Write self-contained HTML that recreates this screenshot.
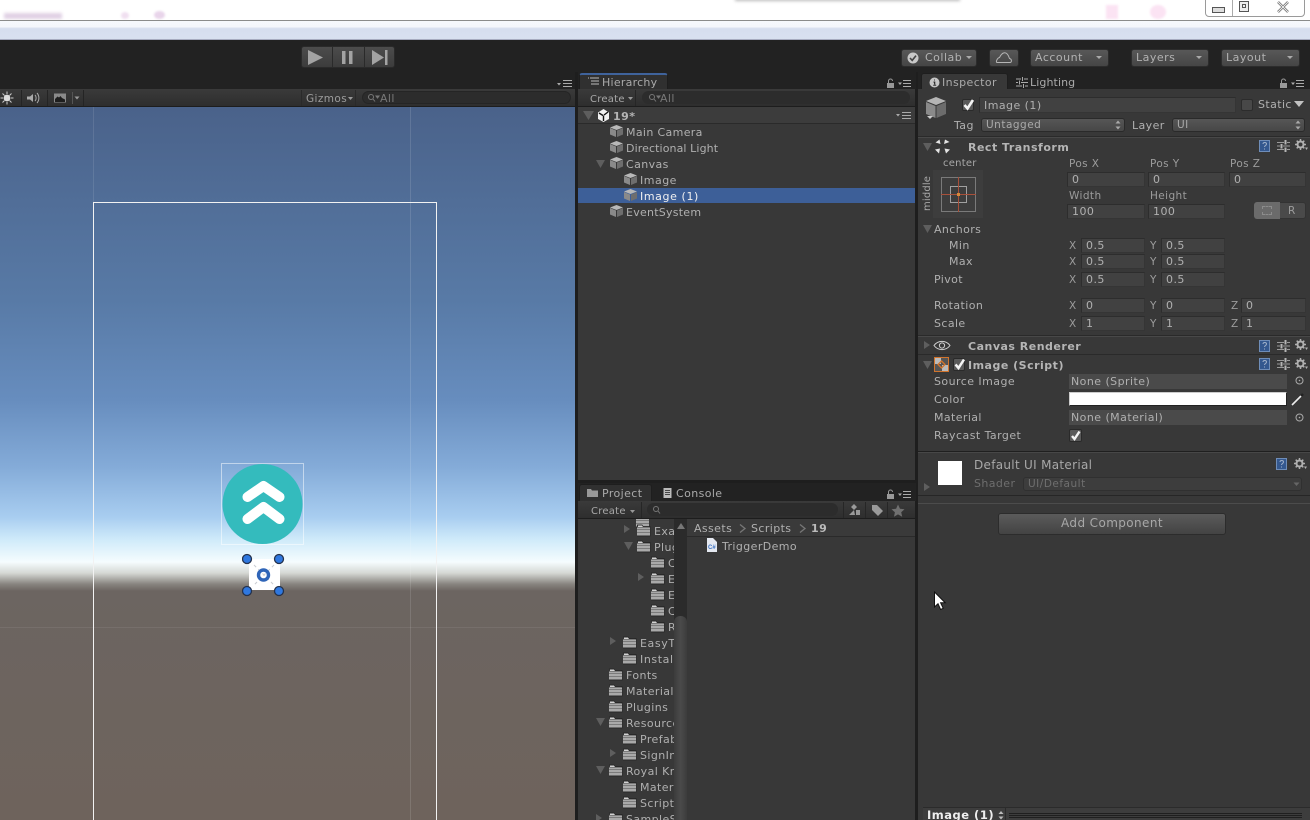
<!DOCTYPE html>
<html><head><meta charset="utf-8"><title>Unity Editor</title>
<style>
html,body{margin:0;padding:0;background:#383838}
#r{position:relative;width:1310px;height:820px;overflow:hidden;background:#222;font-family:"DejaVu Sans","Liberation Sans",sans-serif}
#r div,#r span,#r svg{position:absolute;box-sizing:border-box}
.t{white-space:nowrap;font-size:11px;line-height:16px;letter-spacing:.4px;color:#b0b0b0;margin-top:1px}
.s{color:#9c9c9c;font-size:10.5px}
.c{font-size:10px;letter-spacing:.25px;color:#a8a8a8}
.b{font-weight:bold;letter-spacing:.5px}
.f{background:#414141;border:1px solid #2d2d2d;border-bottom-color:#353535;border-right-color:#353535;height:15px;white-space:nowrap;font-size:11px;line-height:13px;letter-spacing:.45px;color:#b0b0b0;padding-left:4px}
.d{background:linear-gradient(#565656,#474747);border:1px solid #2a2a2a;border-radius:3px;white-space:nowrap;font-size:10.5px;line-height:12px;letter-spacing:.5px;color:#aaa}
.btn{background:linear-gradient(#585858,#454545);border:1px solid #2c2c2c;border-radius:3px;white-space:nowrap;font-size:11px;line-height:15px;letter-spacing:.5px;color:#b2b2b2}
.bar{background:linear-gradient(#3a3a3a,#2e2e2e);border-bottom:1px solid #1d1d1d}
.tab{background:#2e2e2e;border:1px solid #1e1e1e;border-bottom:0;border-radius:3px 3px 0 0}
</style></head><body><div id="r">

<!-- window top -->
<div style="left:0;top:0;width:1310px;height:20px;background:#fff"></div>
<div style="left:4px;top:13px;width:58px;height:6px;background:#e0d0e4;filter:blur(1.5px)"></div>
<div style="left:121px;top:12px;width:8px;height:7px;background:#f0dff0;border-radius:50%;filter:blur(1px)"></div>
<div style="left:154px;top:11px;width:11px;height:8px;background:#e8d4ea;border-radius:50%;filter:blur(1px)"></div>
<div style="left:735px;top:-3px;width:225px;height:4px;background:#bbb;filter:blur(1.5px)"></div>
<div style="left:1106px;top:5px;width:12px;height:14px;background:#fbe3f3;filter:blur(1px)"></div>
<div style="left:1150px;top:5px;width:16px;height:14px;background:#fbe3f3;border-radius:50%;filter:blur(1px)"></div>
<div style="left:0;top:20px;width:1310px;height:1px;background:#8b8b8b"></div>
<div style="left:0;top:21px;width:1310px;height:19px;background:linear-gradient(#f6f8fc 0,#f4f6fb 30%,#d6deef 40%,#d9e0f0 100%)"></div>
<div style="left:0;top:39px;width:1310px;height:1px;background:#a7abc0"></div>

<!-- window controls -->
<div style="left:1205px;top:-2px;width:100px;height:19px;background:#fff;border:1px solid #9a9a9a;border-radius:0 0 4px 4px"></div>
<div style="left:1232px;top:0;width:1px;height:16px;background:#aaa"></div>
<div style="left:1212px;top:7px;width:13px;height:6px;background:#ddd;border:1px solid #555"></div>
<div style="left:1239px;top:1px;width:10px;height:11px;background:#eee;border:1px solid #555"></div>
<div style="left:1242px;top:4px;width:4px;height:4px;border:1px solid #555"></div>
<svg style="left:1276px;top:1px" width="14" height="12"><path d="M2 1L12 11M12 1L2 11" stroke="#666" stroke-width="2.4"/><path d="M2 1L12 11M12 1L2 11" stroke="#eee" stroke-width="1"/></svg>

<!-- toolbar -->
<div style="left:0;top:40px;width:1310px;height:32px;background:#222"></div>
<div style="left:301px;top:46px;width:94px;height:22px;background:linear-gradient(#4c4c4c,#3c3c3c);border:1px solid #2a2a2a;border-radius:3px"></div>
<div style="left:332px;top:47px;width:1px;height:20px;background:#2a2a2a"></div>
<div style="left:364px;top:47px;width:1px;height:20px;background:#2a2a2a"></div>
<svg style="left:301px;top:46px" width="94" height="22"><path d="M7 4L22 11.500L7 19Z" fill="#a3a3a3"/><path d="M41 5h3.500v13H41zM48 5h3.500v13H48z" fill="#a3a3a3"/><path d="M71 4L83 11.500L71 19Z" fill="#a3a3a3"/><path d="M84 4h2.500v15H84z" fill="#a3a3a3"/></svg>

<div class="btn" style="left:901px;top:49px;width:76px;height:18px;padding-left:23px">Collab</div>
<svg style="left:906px;top:51px" width="14" height="14"><circle cx="7" cy="7" r="5.500" fill="#c8c8c8"/><path d="M4 7l2.200 2.400L10 4.600" stroke="#444" stroke-width="1.600" fill="none"/></svg>
<svg style="left:901px;top:49px" width="76" height="18"><path d="M65 7h6l-3 3z" fill="#aaa"/></svg>
<div class="btn" style="left:989px;top:49px;width:30px;height:18px"></div>
<svg style="left:994px;top:50px" width="20" height="15"><path d="M3 12.500h13c2 0 2-3.500-.5-4C14.500 5 12.500 2 9.500 3 7 4 6.500 6 5.500 7.500 3 8 1.500 12.500 3 12.500Z" fill="none" stroke="#b5b5b5"/></svg>
<div class="btn" style="left:1030px;top:49px;width:79px;height:18px;padding-left:4px">Account</div>
<svg style="left:1030px;top:49px" width="79" height="18"><path d="M66 7h6l-3 3z" fill="#aaa"/></svg>
<div class="btn" style="left:1131px;top:49px;width:78px;height:18px;padding-left:4px">Layers</div>
<svg style="left:1130px;top:49px" width="79" height="18"><path d="M66 7h6l-3 3z" fill="#aaa"/></svg>
<div class="btn" style="left:1221px;top:49px;width:79px;height:18px;padding-left:4px">Layout</div>
<svg style="left:1221px;top:49px" width="79" height="18"><path d="M66 7h6l-3 3z" fill="#aaa"/></svg>

<!-- scene -->
<div style="left:0;top:72px;width:577px;height:17px;background:#222"></div>
<svg style="left:556px;top:79px" width="17" height="10"><path d="M1 4h4L3 6.500z" fill="#aaa"/><path d="M7 1.500h9M7 4.500h9M7 7.500h9" stroke="#aaa"/></svg>
<div class="bar" style="left:0;top:89px;width:575px;height:18px"></div>
<div style="left:21px;top:90px;width:1px;height:16px;background:#242424"></div>
<div style="left:47px;top:90px;width:1px;height:16px;background:#242424"></div>
<div style="left:72px;top:92px;width:1px;height:12px;background:#555"></div>
<div style="left:83px;top:90px;width:1px;height:16px;background:#242424"></div>
<div style="left:301px;top:90px;width:1px;height:16px;background:#2a2a2a"></div>
<div style="left:355px;top:90px;width:1px;height:16px;background:#2a2a2a"></div>
<svg style="left:0;top:90px" width="90" height="16"><circle cx="7" cy="8" r="3.400" fill="#ddd"/><path d="M7 1.500v2.500M7 12v2.500M.5 8H3M11 8h2.500M2.500 3.500l2 2M9.500 10.500l2 2M11.500 3.500l-2 2M4.500 10.500l-2 2" stroke="#ccc"/><path d="M27 6.500h3l3-2.500v8l-3-2.500h-3z" fill="#aaa"/><path d="M35 5c1.500 1.500 1.500 4.500 0 6M37 3c2.500 3 2.500 7 0 10" stroke="#aaa" fill="none"/><rect x="54" y="3.500" width="12" height="9" fill="#8a8a8a"/><path d="M55 12V9l2.500-2.500 1.500 1 1.500-1.500 1.500 2 3 1.500v2.500z" fill="#1e1e1e"/><path d="M74.500 6.500h5l-2.500 3z" fill="#999"/></svg>
<span class="t s" style="left:306px;top:90px">Gizmos</span>
<svg style="left:347px;top:96px" width="8" height="6"><path d="M1 1h5L3.500 4z" fill="#999"/></svg>
<div style="left:362px;top:91px;width:209px;height:13px;background:#2c2c2c;border-radius:7px;border:1px solid #252525"></div>
<svg style="left:367px;top:93px" width="13" height="10"><circle cx="4" cy="4" r="2.500" fill="none" stroke="#777"/><path d="M6 6l2 2.500M9 3h3l-1.500 2z" stroke="#777" fill="#777"/></svg>
<span class="t" style="left:380px;top:90px;color:#787878">All</span>

<div style="left:0;top:107px;width:575px;height:713px;background:linear-gradient(#4a628a 0,#587aa6 193px,#678dbe 293px,#84abd8 360px,#a8cdf0 410px,#d0ebfa 433px,#f5fcfe 455px,#d5d8d4 466px,#888580 477px,#6c6561 484px,#6e635c 713px)"></div>
<div style="left:93px;top:107px;width:1px;height:713px;background:rgba(255,255,255,.1)"></div>
<div style="left:410px;top:107px;width:1px;height:713px;background:rgba(255,255,255,.12)"></div>
<div style="left:0;top:627px;width:575px;height:1px;background:rgba(255,255,255,.07)"></div>
<div style="left:93px;top:202px;width:344px;height:640px;border:1px solid #f2f2f2"></div>
<div style="left:221px;top:463px;width:83px;height:82px;border:1px solid rgba(255,255,255,.5)"></div>
<svg style="left:222px;top:464px" width="81" height="80"><circle cx="40.500" cy="40" r="40" fill="#34bbbd"/><path d="M25.500 33L41.500 22L57.500 33M25.500 55L41.500 43L57.500 55" fill="none" stroke="#fff" stroke-width="10" stroke-linecap="round" stroke-linejoin="round"/></svg>
<div style="left:249px;top:559px;width:31px;height:31px;background:#fff"></div>
<svg style="left:242px;top:553px" width="44" height="44"><path d="M12 12L32 32M32 12L12 32" stroke="#c9ccd2" stroke-dasharray="3 3"/><circle cx="21.500" cy="22" r="5" fill="none" stroke="#2f65b8" stroke-width="3.400"/><g fill="#2f78e0" stroke="#24324d" stroke-width="1.300"><circle cx="5" cy="6" r="4.500"/><circle cx="37" cy="6" r="4.500"/><circle cx="5" cy="38" r="4.500"/><circle cx="37" cy="38" r="4.500"/></g></svg>

<!-- dividers -->
<div style="left:575px;top:72px;width:3px;height:748px;background:#1e1e1e"></div>
<div style="left:915px;top:72px;width:3px;height:748px;background:#1e1e1e"></div>

<!-- hierarchy -->
<div style="left:578px;top:72px;width:338px;height:17px;background:#222"></div>
<div class="tab" style="left:579px;top:73px;width:89px;height:17px;background:#303030;border-top:2px solid #3f639c"></div>
<svg style="left:587px;top:77px" width="13" height="9"><path d="M3 1h9M4 4h8M4 7h8" stroke="#bbb"/><path d="M1 1h1" stroke="#bbb"/></svg>
<span class="t" style="left:602px;top:74px;color:#aaa;letter-spacing:.25px">Hierarchy</span>
<svg style="left:886px;top:78px" width="26" height="11"><path d="M1 5h7v5H1z" fill="#999"/><path d="M2.500 5V3a2 2 0 0 1 4 0" fill="none" stroke="#999"/><path d="M12 4.500h4L14 7z" fill="#aaa"/><path d="M17 2.500h8M17 5.500h8M17 8.500h8" stroke="#aaa"/></svg>
<div class="bar" style="left:578px;top:89px;width:337px;height:18px"></div>
<span class="t c" style="left:590px;top:91px">Create</span>
<svg style="left:627px;top:96px" width="8" height="6"><path d="M1 1h5L3.500 4z" fill="#999"/></svg>
<div style="left:635px;top:90px;width:1px;height:16px;background:#262626"></div>
<div style="left:642px;top:91px;width:268px;height:13px;background:#2c2c2c;border-radius:7px"></div>
<svg style="left:648px;top:93px" width="13" height="10"><circle cx="4" cy="4" r="2.500" fill="none" stroke="#777"/><path d="M6 6l2 2.500M9 3h3l-1.500 2z" stroke="#777" fill="#777"/></svg>
<span class="t" style="left:660px;top:90px;color:#787878">All</span>
<div style="left:578px;top:107px;width:337px;height:373px;background:#383838"></div>
<div style="left:578px;top:107px;width:337px;height:17px;background:#3c3c3c;border-bottom:1px solid #2a2a2a"></div>
<svg style="left:582px;top:110px" width="13" height="11"><path d="M1 1h11L6.500 10z" fill="#5e5e5e"/></svg>
<svg style="left:596px;top:108px" width="15" height="15"><path d="M7.500 1L13 4.500V11L7.500 14 2 11V4.500Z" fill="#f2f2f2"/><path d="M7 7.500L3 5M7.500 7.500V13M8 7l4-3" stroke="#111" stroke-width="1.400"/></svg>
<span class="t b" style="left:613px;top:108px;color:#b5b5b5">19*</span>
<svg style="left:896px;top:111px" width="16" height="9"><path d="M0 3h4L2 5.500z" fill="#aaa"/><path d="M6 1.500h9M6 4.500h9M6 7.500h9" stroke="#aaa"/></svg>
<div style="left:578px;top:188px;width:337px;height:15px;background:#3d5f98"></div>
<svg width="0" height="0" style="left:0;top:0"><defs>
<g id="cube"><path d="M6.500 0L13 2.500 6.500 5 0 2.500Z" fill="#b8b8b8"/><path d="M0 3L6 5.500V12L0 9.500Z" fill="#8a8a8a"/><path d="M13 3L7 5.500V12L13 9.500Z" fill="#6e6e6e"/></g>
<g id="fold"><path d="M0 1h5l1 1.500h7V12H0Z" fill="#4a4a4a" stroke="#222" stroke-width=".8"/><path d="M0 3.500h13V11.500H0Z" fill="#a9a9a9"/><path d="M0 5.500h13M0 8.500h13" stroke="#7b7b7b"/><path d="M1 1.500h4l1 1.500H1z" fill="#d2d2d2"/></g>
<g id="gear"><circle cx="5.500" cy="5.500" r="3" fill="none" stroke="#b0b0b0" stroke-width="2"/><path d="M5.500 0v2.500M5.500 8.500V11M0 5.500h2.500M8.500 5.500H11M1.700 1.700l1.700 1.700M7.600 7.600l1.700 1.700M9.300 1.700L7.600 3.400M3.400 7.600L1.700 9.300" stroke="#b0b0b0" stroke-width="1.500"/><path d="M10 8.500h3L11.500 11z" fill="#b0b0b0"/></g>
<g id="help"><rect x=".5" y=".5" width="10" height="11" fill="#34588f" stroke="#6f8db8"/><path d="M4 4c0-2 3.500-2 3.500 0 0 1.500-2 1.500-2 3M5.500 8.500v1" stroke="#9fb0c8" fill="none"/></g>
<g id="slid"><path d="M0 2.500h7M10 2.500h3M0 6h3M6 6h7M0 9.500h7M10 9.500h3" stroke="#9a9a9a"/><path d="M8.500 0v4.500M4.500 4v4.500M8.500 7.500V12" stroke="#b5b5b5" stroke-width="2"/></g>
<g id="ton"><path d="M0 0l6 4-6 4z" fill="#5e5e5e"/></g>
<g id="tdn"><path d="M0 0h9l-4.500 8z" fill="#5e5e5e"/></g>
</defs></svg>
<svg style="left:610px;top:125px" width="13" height="13"><use href="#cube"/></svg><span class="t" style="left:626px;top:124px;letter-spacing:.35px">Main Camera</span>
<svg style="left:610px;top:141px" width="13" height="13"><use href="#cube"/></svg><span class="t" style="left:626px;top:140px;letter-spacing:.1px">Directional Light</span>
<svg style="left:596px;top:160px" width="10" height="9"><use href="#tdn"/></svg>
<svg style="left:610px;top:157px" width="13" height="13"><use href="#cube"/></svg><span class="t" style="left:626px;top:156px">Canvas</span>
<svg style="left:624px;top:173px" width="13" height="13"><use href="#cube"/></svg><span class="t" style="left:640px;top:172px;letter-spacing:.5px">Image</span>
<svg style="left:624px;top:189px" width="13" height="13"><use href="#cube"/></svg><span class="t" style="left:640px;top:188px;color:#f0f0f0;letter-spacing:.6px">Image (1)</span>
<svg style="left:610px;top:205px" width="13" height="13"><use href="#cube"/></svg><span class="t" style="left:626px;top:204px;letter-spacing:.25px">EventSystem</span>

<!-- project -->
<div style="left:578px;top:480px;width:338px;height:3px;background:#1e1e1e"></div>
<div style="left:578px;top:483px;width:338px;height:18px;background:#222"></div>
<div class="tab" style="left:579px;top:484px;width:73px;height:17px;background:#303030"></div>
<svg style="left:587px;top:488px" width="12" height="10"><path d="M0 1h4l1 1.500h6V9H0z" fill="#999"/></svg>
<span class="t" style="left:602px;top:485px;color:#aaa">Project</span>
<svg style="left:663px;top:488px" width="9" height="10"><rect x=".5" width="8" height="10" fill="#bbb"/><path d="M2 2.500h5M2 4.500h5M2 6.500h5" stroke="#444"/></svg>
<span class="t" style="left:676px;top:485px;color:#aaa">Console</span>
<svg style="left:886px;top:489px" width="26" height="11"><path d="M1 5h7v5H1z" fill="#999"/><path d="M2.500 5V3a2 2 0 0 1 4 0" fill="none" stroke="#999"/><path d="M12 4.500h4L14 7z" fill="#aaa"/><path d="M17 2.500h8M17 5.500h8M17 8.500h8" stroke="#aaa"/></svg>
<div class="bar" style="left:578px;top:501px;width:337px;height:18px"></div>
<span class="t c" style="left:591px;top:503px">Create</span>
<svg style="left:629px;top:509px" width="8" height="6"><path d="M1 1h5L3.500 4z" fill="#999"/></svg>
<div style="left:641px;top:502px;width:1px;height:16px;background:#262626"></div>
<div style="left:647px;top:503px;width:191px;height:13px;background:#2c2c2c;border-radius:7px"></div>
<svg style="left:652px;top:505px" width="10" height="10"><circle cx="4" cy="4" r="2.500" fill="none" stroke="#777"/><path d="M6 6l2 2.500" stroke="#777"/></svg>
<div style="left:843px;top:502px;width:1px;height:16px;background:#262626"></div>
<div style="left:865px;top:502px;width:1px;height:16px;background:#262626"></div>
<div style="left:887px;top:502px;width:1px;height:16px;background:#262626"></div>
<svg style="left:848px;top:503px" width="64" height="14"><path d="M6 1l3 3-3 3-3-3zM1 12l5-5 1 5z" fill="#9a9a9a"/><rect x="8" y="7" width="4" height="5" fill="#9a9a9a"/><path d="M24 2h5l6 6-5 5-6-6z" fill="#9a9a9a"/><path d="M50 1.500l2 4.200 4.500.5-3.300 3 1 4.500-4.200-2.300-4 2.300.9-4.500-3.400-3 4.600-.5z" fill="#707070"/></svg>

<div style="left:578px;top:519px;width:96px;height:301px;background:#383838"></div>
<div style="left:674px;top:519px;width:13px;height:301px;background:#2b2b2b"></div>
<div style="left:674px;top:616px;width:13px;height:204px;background:linear-gradient(90deg,#3c3c3c,#4a4a4a,#3c3c3c);border-radius:6px 6px 0 0"></div>
<svg style="left:676px;top:523px" width="10" height="8"><path d="M5 0l4 6H1z" fill="#777"/></svg>
<div style="left:687px;top:519px;width:228px;height:301px;background:#383838"></div>
<div style="left:687px;top:519px;width:228px;height:18px;background:#3a3a3a;border-bottom:1px solid #2a2a2a"></div>
<span class="t" style="left:694px;top:520px">Assets</span>
<svg style="left:738px;top:524px" width="9" height="9"><path d="M2 .5L7 4.500 2 8.500" fill="none" stroke="#777" stroke-width="1.300"/></svg>
<span class="t" style="left:751px;top:520px">Scripts</span>
<svg style="left:798px;top:524px" width="9" height="9"><path d="M2 .5L7 4.500 2 8.500" fill="none" stroke="#777" stroke-width="1.300"/></svg>
<span class="t b" style="left:811px;top:520px;color:#bbb">19</span>
<svg style="left:707px;top:538px" width="10" height="14"><path d="M0 0h6l4 4v10H0z" fill="#e4e8f0"/><text x="1" y="11" font-size="6" font-weight="bold" fill="#3d73c4" font-family="Liberation Sans">C#</text></svg>
<span class="t" style="left:722px;top:538px">TriggerDemo</span>

<div style="left:578px;top:519px;width:96px;height:301px;overflow:hidden">
<svg style="left:58px;top:-4px" width="13" height="13"><use href="#fold"/></svg>
<svg style="left:46px;top:6px" width="9" height="9"><use href="#ton"/></svg><svg style="left:59px;top:5px" width="14" height="13"><use href="#fold"/></svg><span class="t" style="left:76px;top:4px">Example</span>
<svg style="left:46px;top:23px" width="10" height="9"><use href="#tdn"/></svg><svg style="left:59px;top:21px" width="14" height="13"><use href="#fold"/></svg><span class="t" style="left:76px;top:20px">Plugins</span>
<svg style="left:73px;top:37px" width="14" height="13"><use href="#fold"/></svg><span class="t" style="left:90px;top:36px">C</span>
<svg style="left:60px;top:54px" width="9" height="9"><use href="#ton"/></svg><svg style="left:73px;top:53px" width="14" height="13"><use href="#fold"/></svg><span class="t" style="left:90px;top:52px">E</span>
<svg style="left:73px;top:69px" width="14" height="13"><use href="#fold"/></svg><span class="t" style="left:90px;top:68px">E</span>
<svg style="left:73px;top:85px" width="14" height="13"><use href="#fold"/></svg><span class="t" style="left:90px;top:84px">C</span>
<svg style="left:73px;top:101px" width="14" height="13"><use href="#fold"/></svg><span class="t" style="left:90px;top:100px">R</span>
<svg style="left:32px;top:118px" width="9" height="9"><use href="#ton"/></svg><svg style="left:45px;top:117px" width="14" height="13"><use href="#fold"/></svg><span class="t" style="left:62px;top:116px;letter-spacing:.6px">EasyTouch</span>
<svg style="left:45px;top:133px" width="14" height="13"><use href="#fold"/></svg><span class="t" style="left:62px;top:132px;letter-spacing:.6px">Install</span>
<svg style="left:31px;top:149px" width="14" height="13"><use href="#fold"/></svg><span class="t" style="left:48px;top:148px">Fonts</span>
<svg style="left:31px;top:165px" width="14" height="13"><use href="#fold"/></svg><span class="t" style="left:48px;top:164px">Materials</span>
<svg style="left:31px;top:181px" width="14" height="13"><use href="#fold"/></svg><span class="t" style="left:48px;top:180px">Plugins</span>
<svg style="left:18px;top:199px" width="10" height="9"><use href="#tdn"/></svg><svg style="left:31px;top:197px" width="14" height="13"><use href="#fold"/></svg><span class="t" style="left:48px;top:196px">Resources</span>
<svg style="left:45px;top:213px" width="14" height="13"><use href="#fold"/></svg><span class="t" style="left:62px;top:212px">Prefabs</span>
<svg style="left:32px;top:230px" width="9" height="9"><use href="#ton"/></svg><svg style="left:45px;top:229px" width="14" height="13"><use href="#fold"/></svg><span class="t" style="left:62px;top:228px">SignIn</span>
<svg style="left:18px;top:247px" width="10" height="9"><use href="#tdn"/></svg><svg style="left:31px;top:245px" width="14" height="13"><use href="#fold"/></svg><span class="t" style="left:48px;top:244px">Royal Kr</span>
<svg style="left:45px;top:261px" width="14" height="13"><use href="#fold"/></svg><span class="t" style="left:62px;top:260px">Materials</span>
<svg style="left:45px;top:277px" width="14" height="13"><use href="#fold"/></svg><span class="t" style="left:62px;top:276px">Scripts</span>
<svg style="left:18px;top:295px" width="9" height="9"><use href="#ton"/></svg><svg style="left:31px;top:293px" width="14" height="13"><use href="#fold"/></svg><span class="t" style="left:48px;top:292px">SampleS</span>
</div>

<!-- inspector tabs -->
<div style="left:918px;top:72px;width:392px;height:17px;background:#222"></div>
<div class="tab" style="left:921px;top:73px;width:87px;height:17px;background:#383838"></div>
<svg style="left:929px;top:77px" width="11" height="11"><circle cx="5.500" cy="5.500" r="5" fill="#c5c5c5"/><path d="M5.500 2.500v1M4.500 5h1.300v3M4.200 8.200h3" stroke="#333"/></svg>
<span class="t" style="left:942px;top:74px;color:#aaa">Inspector</span>
<svg style="left:1016px;top:77px" width="12" height="11"><path d="M0 2h5M8 2h4M0 5.500h2M5 5.500h7M0 9h6M9 9h3" stroke="#aaa"/><path d="M6.500 0v4M3.500 3.500v4M7.500 7v4" stroke="#aaa"/></svg>
<span class="t" style="left:1030px;top:74px;color:#aaa;letter-spacing:.1px">Lighting</span>
<svg style="left:1279px;top:78px" width="26" height="11"><path d="M1 5h7v5H1z" fill="#999"/><path d="M2.500 5V3a2 2 0 0 1 4 0" fill="none" stroke="#999"/><path d="M12 4.500h4L14 7z" fill="#aaa"/><path d="M17 2.500h8M17 5.500h8M17 8.500h8" stroke="#aaa"/></svg>

<!-- inspector body -->
<div style="left:918px;top:89px;width:392px;height:731px;background:#383838"></div>
<svg style="left:925px;top:97px" width="22" height="25"><path d="M11 0L21 4 11 8 1 4Z" fill="#b5b5b5"/><path d="M1 5L10.500 9V21L1 17Z" fill="#8a8a8a"/><path d="M21 5L11.500 9V21L21 17Z" fill="#6c6c6c"/><path d="M2 19h6l-3 3z" fill="#ccc"/></svg>
<div style="left:962px;top:99px;width:12px;height:12px;background:#5a5a5a;border:1px solid #2a2a2a;border-radius:2px"></div>
<svg style="left:962px;top:97px" width="14" height="15"><path d="M2.500 8l3 3.500L11 3" fill="none" stroke="#f4f4f4" stroke-width="2.600"/></svg>
<div class="f" style="left:979px;top:97px;width:257px;height:16px;background:#414141;line-height:15px">Image (1)</div>
<div style="left:1241px;top:99px;width:12px;height:12px;background:#484848;border:1px solid #2c2c2c;border-radius:2px"></div>
<span class="t" style="left:1258px;top:96px">Static</span>
<svg style="left:1293px;top:100px" width="12" height="9"><path d="M1 1h10L6 7z" fill="#c2c2c2"/></svg>

<span class="t" style="left:954px;top:117px">Tag</span>
<div class="d" style="left:981px;top:118px;width:144px;height:14px;padding-left:4px">Untagged</div>
<svg style="left:1115px;top:120px" width="6" height="10"><path d="M3 .5L5.500 3.500h-5zM3 9.500L5.500 6.500h-5z" fill="#aaa"/></svg>
<span class="t" style="left:1132px;top:117px">Layer</span>
<div class="d" style="left:1172px;top:118px;width:133px;height:14px;padding-left:4px">UI</div>
<svg style="left:1295px;top:120px" width="6" height="10"><path d="M3 .5L5.500 3.500h-5zM3 9.500L5.500 6.500h-5z" fill="#aaa"/></svg>

<div style="left:918px;top:136px;width:392px;height:1px;background:#2a2a2a"></div>
<div style="left:918px;top:137px;width:392px;height:1px;background:#484848"></div>
<svg style="left:923px;top:143px" width="10" height="9"><use href="#tdn"/></svg>
<svg style="left:934px;top:139px" width="17" height="15"><path d="M5.500 .5L6.500 5 1.500 3.500ZM11 .5L10 5 15.500 3ZM1 10.500L6 9.500 5 14.500ZM16 10.500L10.500 9.500 12 14.500Z" fill="#e4e4e4"/></svg>
<span class="t b" style="left:968px;top:139px;color:#b5b5b5">Rect Transform</span>
<svg style="left:1259px;top:140px" width="11" height="12"><use href="#help"/></svg>
<svg style="left:1277px;top:140px" width="13" height="12"><use href="#slid"/></svg>
<svg style="left:1295px;top:139px" width="14" height="12"><use href="#gear"/></svg>

<span class="t c" style="left:943px;top:155px">center</span>
<span class="t c" style="left:920px;top:186px;width:16px;height:16px;transform:rotate(-90deg);transform-origin:50% 50%;text-indent:-8px;line-height:16px;letter-spacing:.15px">middle</span>
<svg style="left:933px;top:170px" width="50" height="48"><rect width="50" height="48" fill="#3d3d3d"/><rect x="8.500" y="7.500" width="34" height="34" fill="none" stroke="#7a7a7a"/><rect x="17.500" y="16.500" width="16" height="16" fill="none" stroke="#a0a0a0"/><path d="M25.500 7v35M8 24.500h35" stroke="#a8503a"/><rect x="24" y="23" width="3" height="3" fill="#d68a3c"/></svg>

<span class="t s" style="left:1069px;top:155px">Pos X</span>
<span class="t s" style="left:1150px;top:155px">Pos Y</span>
<span class="t s" style="left:1230px;top:155px">Pos Z</span>
<div class="f" style="left:1067px;top:172px;width:78px">0</div>
<div class="f" style="left:1148px;top:172px;width:77px">0</div>
<div class="f" style="left:1229px;top:172px;width:77px">0</div>
<span class="t s" style="left:1069px;top:187px">Width</span>
<span class="t s" style="left:1150px;top:187px">Height</span>
<div class="f" style="left:1067px;top:204px;width:78px">100</div>
<div class="f" style="left:1148px;top:204px;width:77px">100</div>
<div style="left:1254px;top:202px;width:52px;height:17px;border-radius:3px;background:#4a4a4a;border:1px solid #333"></div>
<div style="left:1254px;top:202px;width:26px;height:17px;border-radius:3px 0 0 3px;background:#6b6b6b"></div>
<div style="left:1262px;top:206px;width:10px;height:9px;border:1px dashed #8c8c8c"></div>
<span class="t s" style="left:1288px;top:202px">R</span>

<svg style="left:923px;top:225px" width="10" height="9"><use href="#tdn"/></svg>
<span class="t" style="left:934px;top:221px">Anchors</span>
<span class="t" style="left:949px;top:237px">Min</span>
<span class="t" style="left:949px;top:253px">Max</span>
<span class="t" style="left:934px;top:271px">Pivot</span>
<span class="t" style="left:934px;top:297px">Rotation</span>
<span class="t" style="left:934px;top:315px">Scale</span>

<span class="t s" style="left:1069px;top:237px">X</span><div class="f" style="left:1081px;top:238px;width:64px">0.5</div><span class="t s" style="left:1150px;top:237px">Y</span><div class="f" style="left:1161px;top:238px;width:64px">0.5</div>
<span class="t s" style="left:1069px;top:253px">X</span><div class="f" style="left:1081px;top:254px;width:64px">0.5</div><span class="t s" style="left:1150px;top:253px">Y</span><div class="f" style="left:1161px;top:254px;width:64px">0.5</div>
<span class="t s" style="left:1069px;top:271px">X</span><div class="f" style="left:1081px;top:272px;width:64px">0.5</div><span class="t s" style="left:1150px;top:271px">Y</span><div class="f" style="left:1161px;top:272px;width:64px">0.5</div>
<span class="t s" style="left:1069px;top:297px">X</span><div class="f" style="left:1081px;top:298px;width:64px">0</div><span class="t s" style="left:1150px;top:297px">Y</span><div class="f" style="left:1161px;top:298px;width:64px">0</div><span class="t s" style="left:1231px;top:297px">Z</span><div class="f" style="left:1241px;top:298px;width:65px">0</div>
<span class="t s" style="left:1069px;top:315px">X</span><div class="f" style="left:1081px;top:316px;width:64px">1</div><span class="t s" style="left:1150px;top:315px">Y</span><div class="f" style="left:1161px;top:316px;width:64px">1</div><span class="t s" style="left:1231px;top:315px">Z</span><div class="f" style="left:1241px;top:316px;width:65px">1</div>

<div style="left:918px;top:335px;width:392px;height:1px;background:#2a2a2a"></div>
<div style="left:918px;top:336px;width:392px;height:1px;background:#484848"></div>
<svg style="left:924px;top:341px" width="8" height="9"><use href="#ton"/></svg>
<svg style="left:933px;top:339px" width="18" height="13"><path d="M1 6.500C5 1 13 1 17 6.500 13 12 5 12 1 6.500Z" fill="none" stroke="#cfcfcf"/><circle cx="9" cy="6.500" r="2.600" fill="none" stroke="#cfcfcf"/></svg>
<span class="t b" style="left:968px;top:338px;color:#b5b5b5">Canvas Renderer</span>
<svg style="left:1259px;top:340px" width="11" height="12"><use href="#help"/></svg>
<svg style="left:1277px;top:340px" width="13" height="12"><use href="#slid"/></svg>
<svg style="left:1295px;top:339px" width="14" height="12"><use href="#gear"/></svg>
<div style="left:918px;top:354px;width:392px;height:1px;background:#2a2a2a"></div>
<svg style="left:923px;top:361px" width="10" height="9"><use href="#tdn"/></svg>
<svg style="left:934px;top:357px" width="16" height="15"><rect x=".5" y=".5" width="14" height="14" fill="#555" stroke="#d2742c"/><path d="M1 1h6v6H1zM8 8h6v6H8z" fill="#bbb"/><path d="M7.500 4l3.500 3.500L7.500 11 4 7.500z" fill="none" stroke="#d2742c" stroke-width="1.300"/></svg>
<div style="left:953px;top:358px;width:12px;height:13px;background:#5a5a5a;border:1px solid #2a2a2a;border-radius:2px"></div>
<svg style="left:953px;top:357px" width="14" height="14"><path d="M2.500 7.500l3 3.500L11 2.500" fill="none" stroke="#f4f4f4" stroke-width="2.500"/></svg>
<span class="t b" style="left:968px;top:357px;color:#b5b5b5">Image (Script)</span>
<svg style="left:1259px;top:358px" width="11" height="12"><use href="#help"/></svg>
<svg style="left:1277px;top:358px" width="13" height="12"><use href="#slid"/></svg>
<svg style="left:1295px;top:358px" width="14" height="12"><use href="#gear"/></svg>

<span class="t" style="left:934px;top:373px;letter-spacing:.45px">Source Image</span>
<div class="f" style="left:1069px;top:374px;width:218px;height:15px;background:#4a4a4a;border:0;padding-left:2px;line-height:15px">None (Sprite)</div>
<svg style="left:1295px;top:376px" width="9" height="9"><circle cx="4.500" cy="4.500" r="3.500" fill="none" stroke="#aaa"/><circle cx="4.500" cy="4.500" r=".8" fill="#aaa"/></svg>
<span class="t" style="left:934px;top:391px">Color</span>
<div style="left:1069px;top:392px;width:218px;height:14px;background:#fff;border:1px solid #222;border-top-color:#ccc;border-left-color:#ccc"></div>
<svg style="left:1291px;top:392px" width="14" height="14"><path d="M1 13L11 3" stroke="#eee" stroke-width="1.600"/><path d="M10 4l2-2" stroke="#222" stroke-width="2.500"/></svg>
<span class="t" style="left:934px;top:409px">Material</span>
<div class="f" style="left:1069px;top:410px;width:218px;height:15px;background:#4a4a4a;border:0;padding-left:2px;line-height:15px">None (Material)</div>
<svg style="left:1295px;top:413px" width="9" height="9"><circle cx="4.500" cy="4.500" r="3.500" fill="none" stroke="#aaa"/><circle cx="4.500" cy="4.500" r=".8" fill="#aaa"/></svg>
<span class="t" style="left:934px;top:427px;letter-spacing:.45px">Raycast Target</span>
<div style="left:1069px;top:429px;width:13px;height:13px;background:#5a5a5a;border:1px solid #2a2a2a;border-radius:2px"></div>
<svg style="left:1069px;top:428px" width="14" height="14"><path d="M3 8l2.500 3L10.500 3.500" fill="none" stroke="#f4f4f4" stroke-width="2.400"/></svg>

<div style="left:918px;top:451px;width:392px;height:1px;background:#1f1f1f"></div>
<div style="left:918px;top:452px;width:392px;height:1px;background:#474747"></div>
<div style="left:938px;top:461px;width:24px;height:24px;background:#fff"></div>
<span class="t" style="left:974px;top:456px;font-size:12px;letter-spacing:.3px;color:#a8a8a8">Default UI Material</span>
<svg style="left:1276px;top:458px" width="11" height="12"><use href="#help"/></svg>
<svg style="left:1294px;top:458px" width="14" height="12"><use href="#gear"/></svg>
<svg style="left:924px;top:483px" width="9" height="9"><use href="#ton"/></svg>
<span class="t" style="left:974px;top:475px;color:#6e6e6e">Shader</span>
<div class="d" style="left:1023px;top:477px;width:279px;height:14px;padding-left:4px;background:#3d3d3d;border-color:#303030;color:#6f6f6f">UI/Default</div>
<svg style="left:1293px;top:482px" width="7" height="5"><path d="M.5 .5h6l-3 3.500z" fill="#666"/></svg>
<div style="left:918px;top:495px;width:392px;height:1px;background:#262626"></div>
<div style="left:918px;top:503px;width:392px;height:1px;background:#4c4c4c"></div>

<div class="btn" style="left:998px;top:513px;width:228px;height:22px;text-align:center;line-height:18px;font-size:12px;color:#a8a8a8;background:linear-gradient(#5b5b5b,#434343);letter-spacing:.4px">Add Component</div>

<!-- cursor -->
<svg style="left:933px;top:591px" width="14" height="21"><path d="M1.500 1v15l3.500-3.300 2.600 5.800 2.600-1.200-2.600-5.500h4.600z" fill="#fff" stroke="#111"/></svg>

<!-- bottom preview bar -->
<div style="left:923px;top:807px;width:387px;height:13px;background:#3d3d3d;border-top:1px solid #2b2b2b"></div>
<span class="t b" style="left:927px;top:806px;color:#eee;font-size:11.500px">Image (1)</span>
<svg style="left:998px;top:811px" width="6" height="9"><path d="M3 0l2.500 3h-5zM3 8.500L5.500 5.500h-5z" fill="#bbb"/></svg>
<div style="left:1005px;top:808px;width:1px;height:12px;background:#2b2b2b"></div>
<div style="left:1009px;top:813px;width:293px;height:5px;border-top:1px solid #1f1f1f;border-bottom:1px solid #1f1f1f"></div>
<div style="left:1009px;top:815px;width:293px;height:1px;background:#1f1f1f"></div>
</div></body></html>
